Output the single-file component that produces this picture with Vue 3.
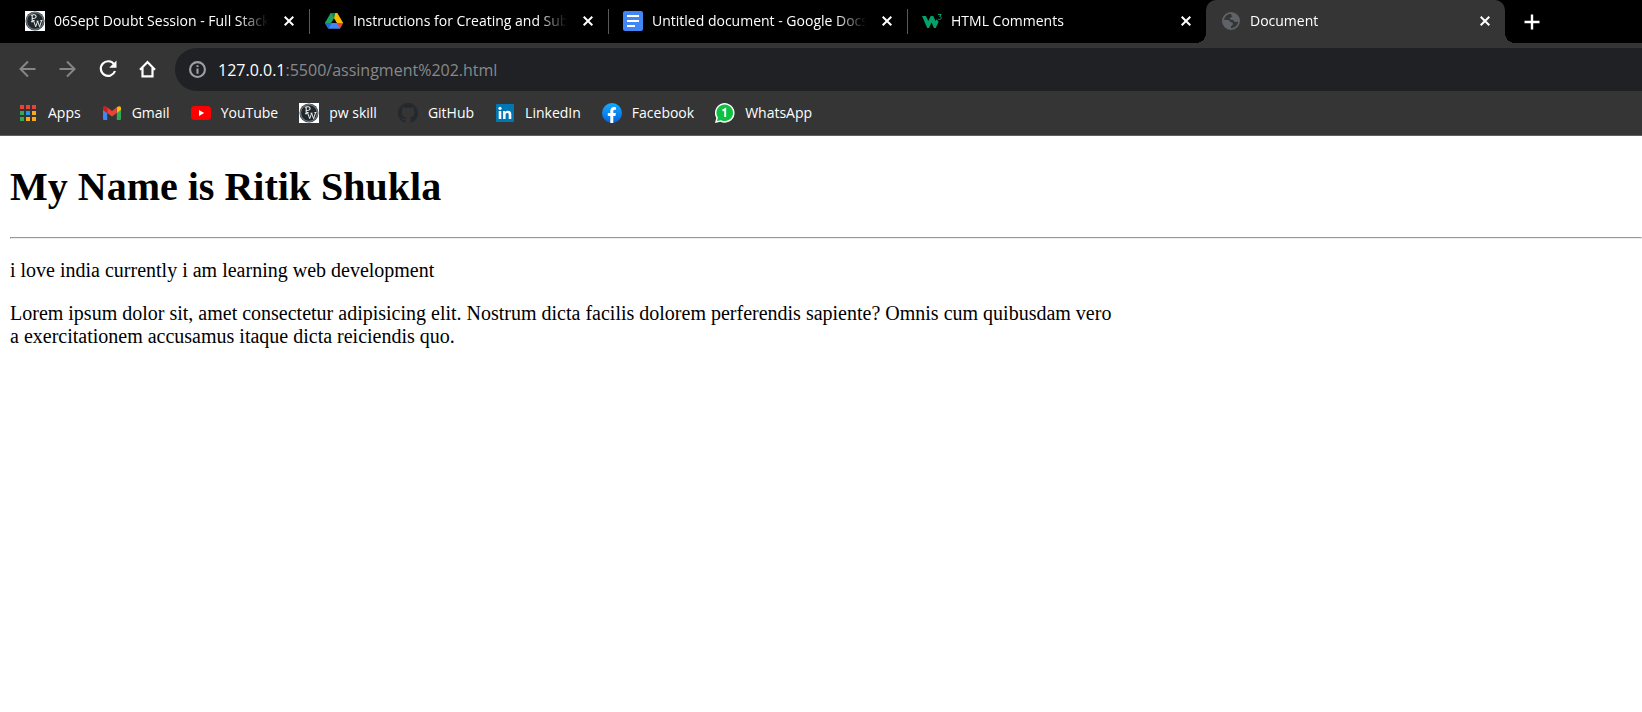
<script setup>
const tabs = [
  { icon: 'pw', title: '06Sept Doubt Session - Full Stack Web' },
  { icon: 'drive', title: 'Instructions for Creating and Submitting' },
  { icon: 'docs', title: 'Untitled document - Google Docs' },
  { icon: 'w3', title: 'HTML Comments' },
  { icon: 'globe', title: 'Document', active: true },
]
const bookmarks = [
  { icon: 'apps', title: 'Apps' },
  { icon: 'gmail', title: 'Gmail' },
  { icon: 'youtube', title: 'YouTube' },
  { icon: 'pw', title: 'pw skill' },
  { icon: 'github', title: 'GitHub' },
  { icon: 'linkedin', title: 'LinkedIn' },
  { icon: 'facebook', title: 'Facebook' },
  { icon: 'whatsapp', title: 'WhatsApp' },
]
</script>

<template>
  <svg class="sprite" aria-hidden="true">
    <symbol id="i-pw" viewBox="0 0 20 20">
      <rect width="20" height="20" fill="#fff" />
      <circle cx="10" cy="10" r="9.500" fill="#30383e" />
      <circle cx="10" cy="10" r="8.400" fill="#1f272c" stroke="#8d9497" stroke-width=".9" />
      <path d="M7.200 3.800v7M5.800 4.300c3-1.100 5.300-.5 5.300 1.100S9.200 7.700 7.400 7.500M6 10.800h2.400" fill="none" stroke="#e8eaea" stroke-width="1.100" />
      <path d="M8.500 9.500l2.200 6.200 1.900-5.400 2 5.400 2-6.200M7.600 9.500h2M11.500 10.200h2M15.400 9.500h2" fill="none" stroke="#e8eaea" stroke-width="1" />
    </symbol>
    <symbol id="i-drive" viewBox="0 0 20 20">
      <path d="M6.700 2h6.600L10 7.700 4.200 17.600.900 12z" fill="#1ea362" />
      <path d="M6.700 2h6.600l5.900 10h-6.400z" fill="#ffba00" />
      <path d="M6.700 2h4.600L10 7.700z" fill="#11843f" />
      <path d="M.900 12h6.500l-3.200 5.600z" fill="#2467dc" />
      <path d="M7.400 12h11.700l-3.300 5.800H4.200z" fill="#4285f4" />
      <path d="M12.800 12h6.300l-3.300 5.800z" fill="#ea4335" />
      <path d="M10 7.500l2.700 4.500H7.300z" fill="#000" />
    </symbol>
    <symbol id="i-docs" viewBox="0 0 20 20">
      <rect width="20" height="20" rx="2" fill="#4285f4" />
      <path d="M4 5h12M4 10h12M4 15h8" stroke="#fff" stroke-width="2" />
    </symbol>
    <symbol id="i-w3" viewBox="0 0 20 20">
      <path d="M0 5h4l2.300 5L8.700 5h2.600l2.200 5 1-1.700 2.200 2.400-3 6.300h-1.800L9.600 11.600 7 17H5.200z" fill="#04a168" />
      <path d="M16 3.500h3.200l-1.500 2c2.300.1 1.900 3.200-.3 3-.8 0-1.300-.3-1.600-.8" fill="none" stroke="#04a168" stroke-width="1" />
    </symbol>
    <symbol id="i-globe" viewBox="0 0 20 20">
      <circle cx="10" cy="10" r="8.100" fill="none" stroke="#5f6368" stroke-width="1.800" />
      <path d="M10.500 2c-1 1.500-.2 2.500.9 2.900-.3 1.600-2 1.200-2.600 2.300-.3 1.300 1.700 1.300 3 1.700 1.200.4 1.100 1.800 2.600 2 1.500.2 2.300-.6 3.600-.5C18.200 5.500 15 2 10.500 2zM2 8.800l5.200.2c1.500.1 1.300 1.900 2.800 2.200 1.700.2 2.100 1.100 1.800 2.300-.3 1.100-1.600.9-1.800 2-.2 1 .2 1.600 0 2.500C5 18 1.700 13.500 2 8.800z" fill="#5f6368" />
    </symbol>
    <symbol id="i-apps" viewBox="0 0 20 20">
      <path d="M2 2h4v4H2zM8 2h4v4H8zM14 2h4v4h-4z" fill="#ea4335" />
      <path d="M2 8h4v4H2zM2 14h4v4H2z" fill="#34a853" />
      <path d="M8 8h4v4H8z" fill="#2196f3" />
      <path d="M14 8h4v4h-4zM8 14h4v4H8zM14 14h4v4h-4z" fill="#fbaa19" />
    </symbol>
    <symbol id="i-gmail" viewBox="0 0 20 20">
      <path d="M1 6.500l4.200 3.200V17H2.300C1.500 17 1 16.500 1 15.700z" fill="#4285f4" />
      <path d="M19 6.500l-4.200 3.200V17h2.900c.8 0 1.300-.5 1.300-1.300z" fill="#34a853" />
      <path d="M14.800 4.300L17 3.200c1.200-.3 2 .6 2 1.600v2.100l-4.200 3.200z" fill="#fbbc04" />
      <path d="M5.200 4.300L10 8l4.800-3.700v5.600L10 13.500 5.200 9.900z" fill="#ea4335" />
      <path d="M1 4.800c0-1.300 1.300-2.100 2.400-1.500l1.800 1v5.700L1 6.900z" fill="#c5221f" />
    </symbol>
    <symbol id="i-youtube" viewBox="0 0 20 20">
      <rect y="3" width="20" height="14" rx="3.500" fill="#f00" />
      <path d="M8 7l5.200 3L8 13z" fill="#fff" />
    </symbol>
    <symbol id="i-github" viewBox="0 0 16 16">
      <path d="M8 0C3.580 0 0 3.580 0 8c0 3.540 2.290 6.530 5.470 7.590.4.070.55-.17.55-.38 0-.19-.01-.82-.01-1.490-2.010.37-2.530-.49-2.690-.94-.09-.23-.48-.94-.82-1.130-.28-.15-.68-.52-.01-.53.630-.01 1.080.58 1.230.82.720 1.210 1.870.87 2.330.66.070-.52.280-.87.510-1.070-1.780-.2-3.640-.89-3.640-3.950 0-.87.310-1.590.82-2.150-.08-.2-.36-1.020.08-2.120 0 0 .67-.21 2.200.82.640-.18 1.320-.27 2-.27s1.360.09 2 .27c1.530-1.040 2.200-.82 2.200-.82.440 1.100.160 1.920.080 2.120.510.560.820 1.270.820 2.150 0 3.070-1.870 3.750-3.650 3.950.290.250.540.730.540 1.480 0 1.070-.01 1.930-.01 2.200 0 .21.150.46.550.38A8.010 8.010 0 0016 8c0-4.420-3.580-8-8-8z" fill="#24292e" />
    </symbol>
    <symbol id="i-linkedin" viewBox="0 0 20 20">
      <rect x="1" y="1" width="18" height="18" rx="1" fill="#0077b5" />
      <path d="M3.700 8h2.600v8H3.700zM8 8h2.500v1.200c1.300-2.200 5.800-1.900 5.800 2V16h-2.600v-4.200c0-2.400-3.100-2.200-3.100 0V16H8z" fill="#fff" />
      <circle cx="5" cy="5.300" r="1.600" fill="#fff" />
    </symbol>
    <symbol id="i-facebook" viewBox="0 0 20 20">
      <defs><linearGradient id="fb" x2="0" y2="1"><stop stop-color="#18acfe" /><stop offset="1" stop-color="#0163e0" /></linearGradient></defs>
      <circle cx="10" cy="10" r="10" fill="url(#fb)" />
      <path d="M8.300 19.900v-6.800H5.800V10h2.500V8.200c0-4 2.700-4.700 5.600-4v2.700c-1.800-.2-2.600.1-2.600 1.500V10h2.600l-.5 3.100h-2.100v6.800z" fill="#fff" />
    </symbol>
    <symbol id="i-whatsapp" viewBox="0 0 20 20">
      <path d="M0 20l1.300-5.100A9.800 9.800 0 1 1 5.400 18.700z" fill="#fff" />
      <path d="M2 18l.9-3.500A8.300 8.300 0 1 1 6 17.200z" fill="#0fc143" />
      <path d="M7.500 7.600l2.700-1.500v8" fill="none" stroke="#fff" stroke-width="1.900" />
    </symbol>
  </svg>

  <header class="chrome">
    <nav class="tabs" aria-label="Tabs">
      <div v-for="t in tabs" :key="t.title" class="tab" :class="{ active: t.active }">
        <svg class="icon" aria-hidden="true"><use :href="'#i-' + t.icon" /></svg>
        <span class="title">{{ t.title }}</span>
        <button class="close" :aria-label="'Close ' + t.title">
          <svg viewBox="0 0 10 10"><path d="M.7.7l8.600 8.600M9.300.7L.7 9.300" /></svg>
        </button>
      </div>
      <button class="new-tab" aria-label="New tab">
        <svg viewBox="0 0 16 16"><path d="M8 .5v15M.5 8h15" /></svg>
      </button>
    </nav>

    <div class="toolbar">
      <button class="nav dim" aria-label="Back"><svg viewBox="0 0 20 20"><path d="M17.500 10H3M10 2.500L2.500 10l7.500 7.500" /></svg></button>
      <button class="nav dim" aria-label="Forward"><svg viewBox="0 0 20 20"><path d="M1.500 10H16M9 2.500l7.500 7.500L9 17.500" /></svg></button>
      <button class="nav" aria-label="Reload"><svg viewBox="0 0 20 20"><path d="M16.200 5.500A7.300 7.300 0 1 0 17 12" stroke-width="2.200" /><path d="M18.500 1.500v7.300h-7.300z" fill="#fff" stroke="none" /></svg></button>
      <button class="nav" aria-label="Home"><svg viewBox="0 0 20 20"><path d="M2 10.700L9.500 3l7.500 7.700M4.500 9v8.400h10V9" stroke-width="2.200" /></svg></button>
      <div class="address">
        <svg class="info" viewBox="0 0 16 16" aria-hidden="true"><circle cx="8" cy="8" r="7" /><path d="M8 7v5M8 4v1.700" /></svg>
        <a class="url" href="#"><b>127.0.0.1</b>:5500/assingment%202.html</a>
      </div>
    </div>

    <nav class="bookmarks" aria-label="Bookmarks">
      <a v-for="b in bookmarks" :key="b.title" href="#">
        <svg class="icon" aria-hidden="true"><use :href="'#i-' + b.icon" /></svg>
        <span>{{ b.title }}</span>
      </a>
    </nav>
  </header>

  <main class="page">
    <h1>My Name is Ritik Shukla</h1>
    <hr />
    <p>i love india currently i am learning web development</p>
    <p>
      Lorem ipsum dolor sit, amet consectetur adipisicing elit. Nostrum dicta facilis dolorem perferendis sapiente? Omnis cum quibusdam vero<br />
      a exercitationem accusamus itaque dicta reiciendis quo.
    </p>
  </main>
</template>

<style>
body {
  background: #fff;
  overflow-x: hidden;
}
</style>

<style scoped>
.sprite {
  position: absolute;
  width: 0;
  height: 0;
}
.chrome {
  background: #353535;
  border-bottom: 1px solid #5f5f5f;
  font: 14px/20px "Open Sans", "Noto Sans", sans-serif;
  color: #fff;
}
button {
  border: 0;
  padding: 0;
  background: none;
  color: inherit;
  display: flex;
  align-items: center;
  justify-content: center;
}
a {
  color: inherit;
  text-decoration: none;
}
.icon {
  width: 20px;
  height: 20px;
  flex: none;
}
.tabs {
  display: flex;
  align-items: center;
  height: 43px;
  padding-left: 10px;
  background: #000;
}
.tab {
  position: relative;
  box-sizing: border-box;
  display: flex;
  align-items: center;
  flex: 0 1 299px;
  min-width: 0;
  height: 43px;
  padding: 0 10px 1px 15px;
}
.tab::after {
  content: "";
  position: absolute;
  right: -1px;
  top: 9px;
  width: 1px;
  height: 25px;
  background: #5a5a5a;
}
.tab:nth-child(4)::after {
  display: none;
}
.tab.active {
  background: #353535;
  border-radius: 10px 10px 0 0;
}
.tab.active::before,
.tab.active::after {
  content: "";
  display: block;
  position: absolute;
  top: auto;
  bottom: 0;
  width: 10px;
  height: 10px;
}
.tab.active::before {
  left: -10px;
  background: radial-gradient(circle at 0 0, #000 10px, #353535 10px);
}
.tab.active::after {
  right: -10px;
  background: radial-gradient(circle at 100% 0, #000 10px, #353535 10px);
}
.title {
  flex: 1;
  min-width: 0;
  margin: 0 11px 0 9px;
  white-space: nowrap;
  overflow: hidden;
  mask-image: linear-gradient(to left, transparent, #000 30px);
}
.close {
  width: 20px;
  height: 20px;
}
.close svg {
  width: 10px;
  height: 10px;
  stroke: #fff;
  stroke-width: 2;
}
.new-tab {
  width: 36px;
  height: 36px;
  margin-left: 9px;
}
.new-tab svg {
  width: 16px;
  height: 16px;
  stroke: #fff;
  stroke-width: 2.4;
}
.toolbar {
  display: flex;
  align-items: flex-start;
  padding: 5px 0 0 8px;
}
.nav {
  width: 40px;
  height: 42px;
  flex: none;
}
.nav svg {
  width: 20px;
  height: 20px;
  fill: none;
  stroke: #fff;
  stroke-width: 2;
}
.nav.dim svg {
  stroke: #868686;
}
.address {
  flex: 1;
  display: flex;
  align-items: center;
  gap: 12px;
  height: 43px;
  margin-left: 7px;
  padding-left: 14px;
  border-radius: 22px 0 0 22px;
  background: #202124;
}
.info {
  width: 17px;
  height: 17px;
  fill: none;
  stroke: #9aa0a6;
  stroke-width: 2;
}
.url {
  font-size: 16px;
  line-height: 24px;
  color: #87898b;
}
.url b {
  font-weight: 400;
  color: #fff;
}
.bookmarks {
  display: flex;
  gap: 21px;
  padding: 12px 18px;
}
.bookmarks a {
  display: flex;
  align-items: center;
  gap: 10px;
}
.page {
  padding: 0 0 10px 10px;
  font: 20px/23px "Liberation Serif", serif;
  color: #000;
}
h1 {
  margin: 0;
  padding: 27px 0;
  font-size: 40px;
  line-height: 47px;
}
hr {
  margin: 0;
  border: 1px solid;
  border-color: #999 #eee #eee #999;
}
p {
  margin: 20px 0;
}
</style>
